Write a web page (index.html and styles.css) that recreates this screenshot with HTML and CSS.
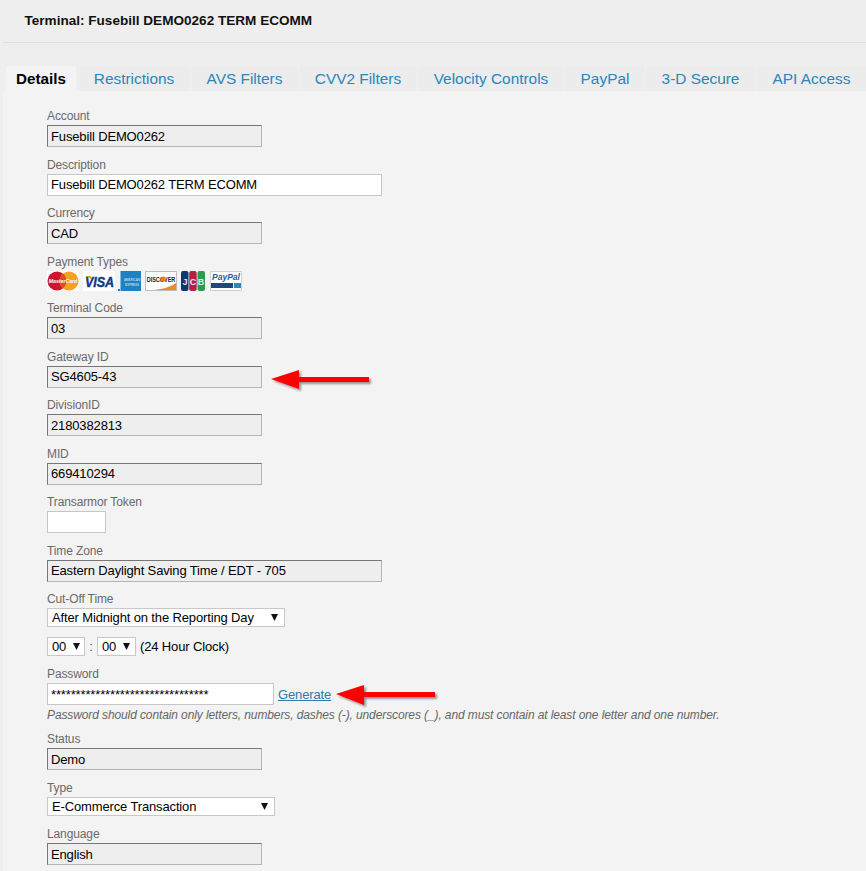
FILE: index.html
```html
<!DOCTYPE html>
<html lang="en">
<head>
<meta charset="utf-8">
<title>Terminal</title>
<link rel="stylesheet" href="styles.css">
</head>
<body>
<header class="page-head"><h1 class="page-title">Terminal: Fusebill DEMO0262 TERM ECOMM</h1></header>
<nav class="tabs">
  <a class="tab active w-details">Details</a>
  <a class="tab w-restr">Restrictions</a>
  <a class="tab w-avs">AVS Filters</a>
  <a class="tab w-cvv">CVV2 Filters</a>
  <a class="tab w-vel">Velocity Controls</a>
  <a class="tab w-pay">PayPal</a>
  <a class="tab w-3d">3-D Secure</a>
  <a class="tab w-api">API Access</a>
</nav>
<main class="panel">
  <div class="field"><label class="lbl">Account</label><input class="inp ro" readonly value="Fusebill DEMO0262"></div>
  <div class="field"><label class="lbl">Description</label><input class="inp wide" value="Fusebill DEMO0262 TERM ECOMM"></div>
  <div class="field"><label class="lbl">Currency</label><input class="inp ro" readonly value="CAD"></div>
  <div class="field"><label class="lbl">Payment Types</label>
    <div class="cards">
      <svg class="card" width="32" height="20" viewBox="0 0 32 20"><rect width="32" height="20" fill="#fff"/><circle cx="10" cy="10" r="9.500" fill="#d0142c"/><circle cx="22" cy="10" r="9.500" fill="#f6a11f"/><path d="M16 2.600a9.500 9.500 0 0 1 0 14.800a9.500 9.500 0 0 1 0-14.800z" fill="#d8501c"/><text transform="translate(16 12) scale(1 1.200)" class="t-mc">MasterCard</text></svg>
      <svg class="card c-visa" width="32" height="20" viewBox="0 0 32 20"><rect width="32" height="20" fill="#fff"/><path d="M2 5h6l1.500 5C8 7.500 5 6 2 5z" fill="#f2a71e"/><text transform="translate(16.500 15.500) scale(1 1.150)" class="t-visa">VISA</text></svg>
      <svg class="card c-amex" width="23" height="20" viewBox="0 0 23 20"><rect x="2.500" width="20.500" height="20" fill="#1f80c2"/><rect y="18" width="2" height="2" fill="#1f80c2"/><text x="14" y="10" class="t-amex">AMERICAN</text><text x="14" y="14.500" class="t-amex">EXPRESS</text></svg>
      <svg class="card c-disc" width="32" height="20" viewBox="0 0 32 20"><rect x=".5" y=".5" width="31" height="19" fill="#fff" stroke="#bdbdbd"/><path d="M31 12v7H9c9-1 16-3 22-7z" fill="#ef8a2b"/><text transform="translate(16 10.500) scale(1 1.300)" class="t-disc">DISCOVER</text><circle cx="18.300" cy="8" r="2.600" fill="#ef7d23"/></svg>
      <svg class="card c-jcb" width="24" height="20" viewBox="0 0 24 20"><rect width="7.500" height="20" rx="2" fill="#10386f"/><rect x="8.200" width="7.500" height="20" rx="2" fill="#b91d42"/><rect x="16.500" width="7.500" height="20" rx="2" fill="#2b9c4c"/><text x="4" y="13.500" class="t-jcb">J</text><text x="12" y="13.500" class="t-jcb">C</text><text x="20" y="13.500" class="t-jcb">B</text></svg>
      <svg class="card c-pp" width="32" height="20" viewBox="0 0 32 20"><rect x=".5" y=".5" width="31" height="19" fill="#fff" stroke="#d0d0d0"/><text x="16" y="9" class="t-pp">PayPal</text><rect x="1" y="12" width="22" height="5" fill="#1d4a7e"/><rect x="24" y="12" width="7" height="5" fill="#2e86c1"/></svg>
    </div>
  </div>
  <div class="field"><label class="lbl">Terminal Code</label><input class="inp ro" readonly value="03"></div>
  <div class="field"><label class="lbl">Gateway ID</label>
    <div class="row-arrow"><input class="inp ro" readonly value="SG4605-43">
      <svg class="arrow arrow-gw" width="104" height="30" viewBox="0 0 104 30"><defs><filter id="s1" x="-10%" y="-30%" width="125%" height="170%"><feDropShadow dx="2" dy="2" stdDeviation="1" flood-color="#000" flood-opacity=".4"/></filter></defs><path d="M1 14 29 5v7h70v5H29v7z" fill="#f00" filter="url(#s1)"/></svg>
    </div>
  </div>
  <div class="field"><label class="lbl">DivisionID</label><input class="inp ro" readonly value="2180382813"></div>
  <div class="field"><label class="lbl">MID</label><input class="inp ro" readonly value="669410294"></div>
  <div class="field"><label class="lbl">Transarmor Token</label><input class="inp tiny" value=""></div>
  <div class="field"><label class="lbl">Time Zone</label><input class="inp ro wide" readonly value="Eastern Daylight Saving Time / EDT - 705"></div>
  <div class="field f-cut"><label class="lbl">Cut-Off Time</label>
    <select class="sel sel-cut"><option>After Midnight on the Reporting Day</option></select>
  </div>
  <div class="time">
    <select class="sel sel-t"><option>00</option></select><span class="colon">:</span><select class="sel sel-t2"><option>00</option></select><span class="clock">(24 Hour Clock)</span>
  </div>
  <div class="field f-pw"><label class="lbl">Password</label>
    <div class="row-arrow"><input class="inp pw" value="********************************"><a class="gen">Generate</a>
      <svg class="arrow arrow-pw" width="104" height="30" viewBox="0 0 104 30"><defs><filter id="s2" x="-10%" y="-30%" width="125%" height="170%"><feDropShadow dx="2" dy="2" stdDeviation="1" flood-color="#000" flood-opacity=".4"/></filter></defs><path d="M1 12 29 3v7h71v5H29v8z" fill="#f00" filter="url(#s2)"/></svg>
    </div>
    <p class="hint">Password should contain only letters, numbers, dashes (-), underscores (_), and must contain at least one letter and one number.</p>
  </div>
  <div class="field"><label class="lbl">Status</label><input class="inp ro" readonly value="Demo"></div>
  <div class="field f-type"><label class="lbl">Type</label>
    <select class="sel sel-type"><option>E-Commerce Transaction</option></select>
  </div>
  <div class="field"><label class="lbl">Language</label><input class="inp ro" readonly value="English"></div>
</main>
</body>
</html>
```
FILE: styles.css
```css
html, body { margin: 0; padding: 0; height: 871px; overflow: hidden; }
body { background: #eeeeee; font-family: "Liberation Sans", Arial, sans-serif; font-size: 14px; color: #000; }
.page-head { margin-left: 3px; height: 42px; border-bottom: 1px solid #dfdfdf; box-sizing: content-box; }
.page-title { margin: 0 0 0 21.500px; padding-top: 13px; font-size: 13.570px; line-height: 16px; font-weight: bold; color: #111; white-space: nowrap; }
.tabs { display: flex; margin-top: 23px; height: 25px; margin-left: 6px; gap: 3px; }
.tab { display: flex; flex: none; align-items: center; justify-content: center; height: 25px; background: #ececec; color: #2a86bb; font-size: 15.400px; white-space: nowrap; }
.tab.active { background: #f3f3f3; color: #000; font-weight: bold; font-size: 15.200px; }
.w-details { width: 70px; }
.w-restr { width: 110px; }
.w-avs { width: 105px; }
.w-cvv { width: 116px; }
.w-vel { width: 144px; }
.w-pay { width: 78px; }
.w-3d { width: 107px; }
.w-api { width: 109px; }
.panel { margin-left: 3px; background: #f3f3f3; padding: 18px 0 0 44px; height: 800px; }
.field { margin-bottom: 10.500px; }
.lbl { display: block; height: 16px; line-height: 14px; font-size: 12px; letter-spacing: -0.120px; color: #6a6a6a; white-space: nowrap; }
.inp { display: block; flex: none; box-sizing: border-box; width: 215px; height: 22px; padding: 0 3px; border: 1px solid #c6c6c6; background: #fff; font: 13px "Liberation Sans", Arial, sans-serif; letter-spacing: -0.140px; color: #000; outline: none; border-radius: 0; }
.ro { background: #eeeeee; border-color: #767676 #b5b5b5 #b5b5b5 #767676; }
.wide { width: 335px; }
.tiny { width: 59px; }
.pw { width: 227px; }
.cards { display: flex; height: 20px; }
.card { flex: none; display: block; overflow: visible; }
.c-visa { margin-left: 4px; }
.c-amex { margin-left: 3px; }
.c-disc { margin-left: 4px; }
.c-jcb { margin-left: 4px; }
.c-pp { margin-left: 5px; }
.t-mc { font: italic bold 5.200px "Liberation Sans", sans-serif; fill: #fff; text-anchor: middle; }
.t-visa { font: italic bold 12.500px "Liberation Sans", sans-serif; fill: #0f3a8a; stroke: #0f3a8a; stroke-width: .4px; text-anchor: middle; }
.t-amex { font: bold 3px "Liberation Sans", sans-serif; fill: #b5d6ec; text-anchor: middle; }
.t-disc { font: bold 5.500px "Liberation Sans", sans-serif; fill: #222; text-anchor: middle; }
.t-jcb { font: bold 9px "Liberation Sans", sans-serif; fill: #dfe6ee; text-anchor: middle; }
.t-pp { font: italic bold 8.500px "Liberation Sans", sans-serif; fill: #2a5aa5; text-anchor: middle; }
.row-arrow { position: relative; display: flex; align-items: center; }
.arrow { position: absolute; }
.arrow-gw { left: 223px; top: -1px; }
.arrow-pw { left: 288px; top: -1px; }
.sel { display: block; flex: none; box-sizing: border-box; height: 19px; padding: 0 0 0 4px; border: 1px solid #c8c8c8; border-radius: 0; appearance: none; -webkit-appearance: none; font: 13px "Liberation Sans", Arial, sans-serif; letter-spacing: -0.140px; color: #000; background: #fff url("data:image/svg+xml,%3Csvg xmlns='http://www.w3.org/2000/svg' width='7' height='7'%3E%3Cpath d='M0 0h7L3.500 7z' fill='%23111'/%3E%3C/svg%3E") no-repeat right 6px center; outline: none; }
.sel-cut { width: 238px; }
.sel-type { width: 228px; }
.sel-t { width: 38px; background-position: right 4px center; }
.sel-t2 { width: 39px; background-position: right 5px center; }
.f-cut { margin-bottom: 10px; }
.time { display: flex; align-items: center; height: 19px; margin-bottom: 11px; font-size: 13px; letter-spacing: -0.140px; color: #000; }
.colon { width: 12px; text-align: center; color: #555; }
.clock { margin-left: 4px; }
.f-pw { margin-bottom: 9px; }
.gen { margin-left: 4px; font-size: 13px; letter-spacing: -0.140px; color: #2a7cab; text-decoration: underline; }
.hint { margin: 3px 0 0; font-size: 12px; letter-spacing: -0.110px; line-height: 15px; font-style: italic; color: #666; white-space: nowrap; }
.f-type { margin-bottom: 11.500px; }
```
